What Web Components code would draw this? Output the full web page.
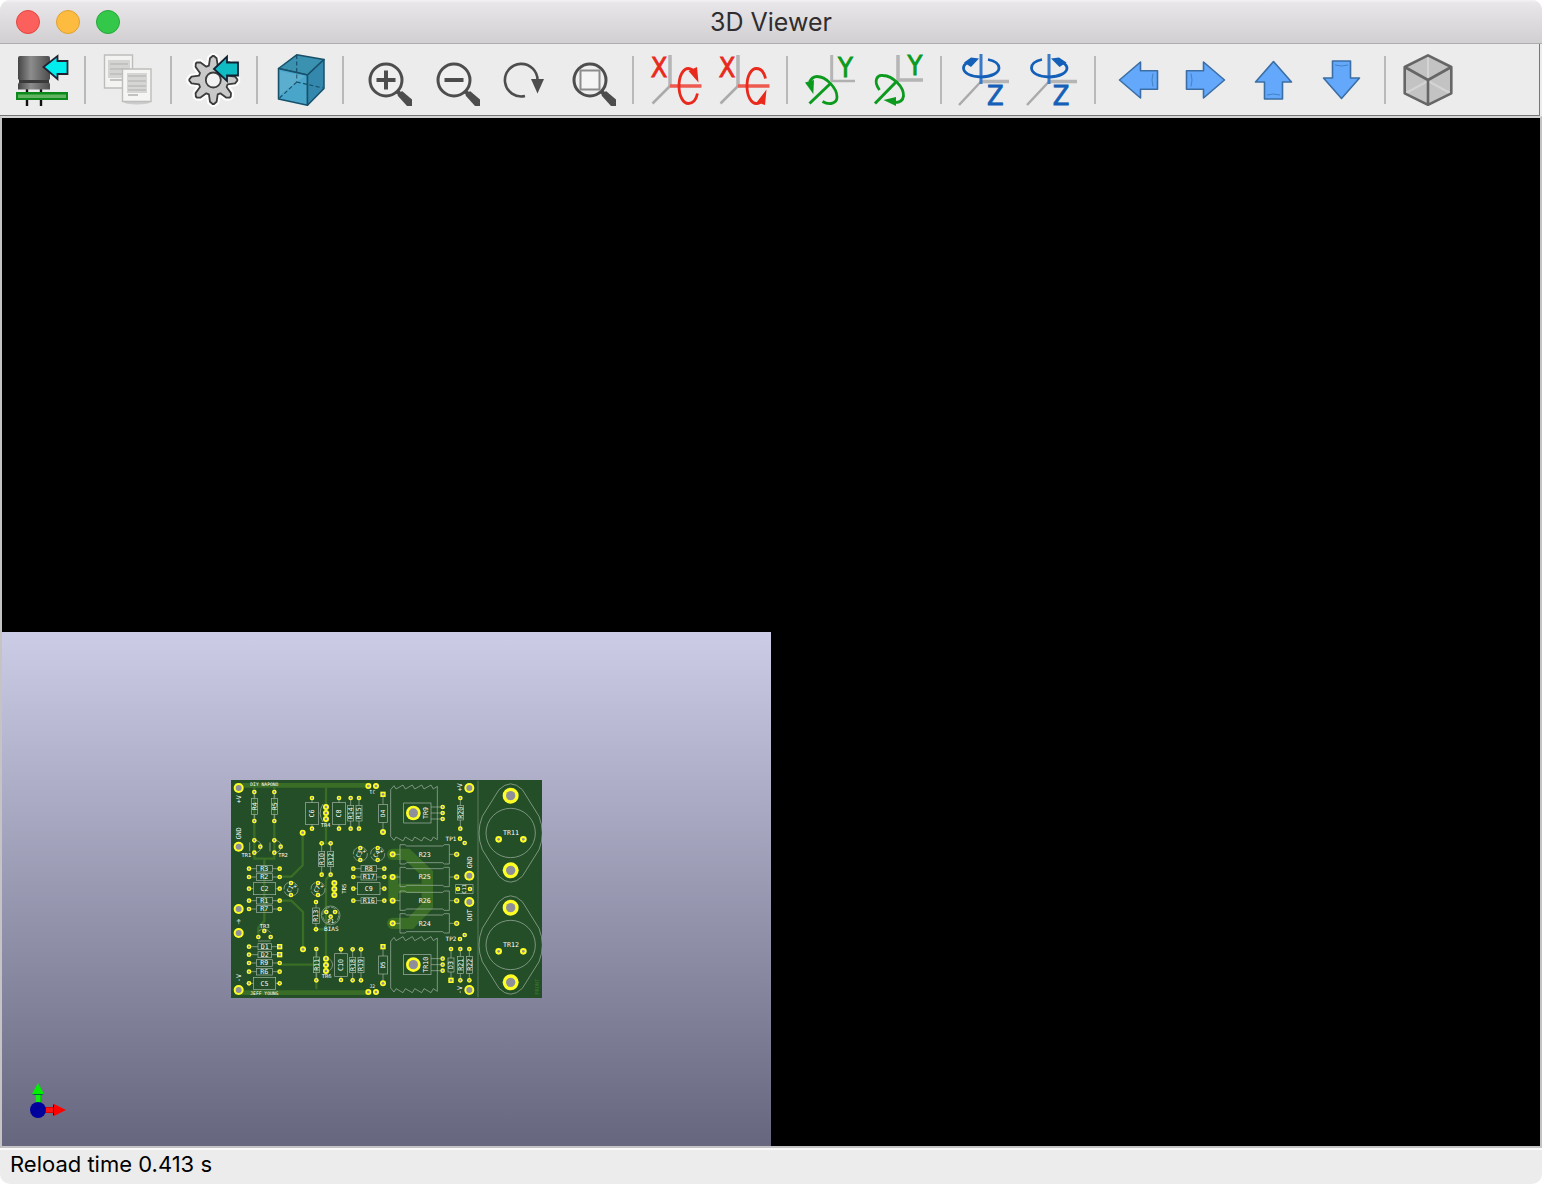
<!DOCTYPE html>
<html lang="en">
<head>
<meta charset="utf-8">
<title>3D Viewer</title>
<style>
  html, body { margin: 0; height: 100%; background: #fff; }
  body { font-family: Inter, Roboto, sans-serif; }
</style>
</head>
<body>
<viewer-window>
  <title-bar slot="title">3D Viewer</title-bar>
  <tool-bar slot="tools">
    <tool-button icon="reload" label="Reload board"></tool-button>
    <tool-divider></tool-divider>
    <tool-button icon="copy" label="Copy 3D image to clipboard"></tool-button>
    <tool-divider></tool-divider>
    <tool-button icon="settings" label="Set display options"></tool-button>
    <tool-divider></tool-divider>
    <tool-button icon="render" label="Render current view"></tool-button>
    <tool-divider></tool-divider>
    <tool-button icon="zoomin" label="Zoom in"></tool-button>
    <tool-button icon="zoomout" label="Zoom out"></tool-button>
    <tool-button icon="redraw" label="Redraw view"></tool-button>
    <tool-button icon="fit" label="Fit in page"></tool-button>
    <tool-divider></tool-divider>
    <tool-button icon="xneg" label="Rotate X clockwise"></tool-button>
    <tool-button icon="xpos" label="Rotate X counterclockwise"></tool-button>
    <tool-divider></tool-divider>
    <tool-button icon="yneg" label="Rotate Y clockwise"></tool-button>
    <tool-button icon="ypos" label="Rotate Y counterclockwise"></tool-button>
    <tool-divider></tool-divider>
    <tool-button icon="zneg" label="Rotate Z clockwise"></tool-button>
    <tool-button icon="zpos" label="Rotate Z counterclockwise"></tool-button>
    <tool-divider></tool-divider>
    <tool-button icon="left" label="Move left"></tool-button>
    <tool-button icon="right" label="Move right"></tool-button>
    <tool-button icon="up" label="Move up"></tool-button>
    <tool-button icon="down" label="Move down"></tool-button>
    <tool-divider></tool-divider>
    <tool-button icon="ortho" label="Toggle orthographic projection"></tool-button>
  </tool-bar>
  <scene-view>
    <pcb-board></pcb-board>
    <axis-gizmo></axis-gizmo>
  </scene-view>
  <status-bar slot="status">Reload time 0.413 s</status-bar>
</viewer-window>

<script>
const define = (name, html, setup) => customElements.define(name, class extends HTMLElement {
  constructor() {
    super();
    const root = this.attachShadow({ mode: 'open' });
    const tpl = document.createElement('template');
    tpl.innerHTML = html;
    root.append(tpl.content.cloneNode(true));
    if (setup) setup(this, root);
  }
});

define('viewer-window', `
  <style>
    :host { display: flex; flex-direction: column; height: 100vh; overflow: hidden; border-radius: 10px; background: #ececec; }
    main { flex: 1; min-height: 0; display: flex; border: 2px solid #c4c4c4; border-top-color: #d4d4d4; background: #000; }
  </style>
  <slot name="title"></slot>
  <slot name="tools"></slot>
  <main><slot></slot></main>
  <slot name="status"></slot>`);

define('title-bar', `
  <style>
    :host { display: grid; grid-template-columns: 1fr auto 1fr; align-items: center; height: 43px;
      border-bottom: 1px solid #aeacae; background: linear-gradient(#f4f2f4 0, #e8e6e8 3px, #d1cfd1 100%); }
    .lights { display: flex; gap: 16px; padding-left: 16px; }
    button { width: 24px; height: 24px; padding: 0; border: 1px solid #e2463f; border-radius: 50%; background: #fc605c; }
    button.min { border-color: #e0a030; background: #fdbc40; }
    button.max { border-color: #25a73a; background: #34c84a; }
    h1 { margin: 0; font-size: 25px; line-height: 32px; font-weight: 400; color: #2f2d2f; }
  </style>
  <div class="lights">
    <button aria-label="Close"></button><button class="min" aria-label="Minimize"></button><button class="max" aria-label="Zoom"></button>
  </div>
  <h1><slot></slot></h1>`);

define('tool-bar', `
  <style>
    :host { display: flex; align-items: center; gap: 16px; height: 71px; padding: 0 16px; margin-right: 2px; box-sizing: border-box;
      border-right: 1px solid #777; background: #ececec; box-shadow: 0 1px #777; margin-bottom: 1px; }
  </style>
  <slot></slot>`);

define('tool-divider', `<style>:host { display: block; width: 2px; height: 48px; background: #b9b9b9; }</style>`);

define('status-bar', `
  <style>
    :host { display: block; padding: 0 10px 5px; border-top: 2px solid #fafafa; font-size: 22px; line-height: 29px; color: #000; }
  </style>
  <slot></slot>`);

const sky = '<path fill="#64a8fb" stroke="#3b6ea5" stroke-width="1.6" stroke-linejoin="round" ';
const lens = '<circle cx="26" cy="26" r="16" fill="#efefef" stroke="#4d4d4d" stroke-width="3"/><path d="M37 37l4 4" stroke="#4d4d4d" stroke-width="4"/><path d="M37.500 41.500L42 37 52 45.500V52H47z" fill="#4d4d4d"/>';
const letter = (ch, x, y, color) => `<text x="${x}" y="${y}" font-size="27" text-anchor="middle" fill="${color}" stroke="${color}" stroke-width=".8" font-family="'Liberation Sans Narrow','DejaVu Sans Condensed',sans-serif">${ch}</text>`;
const gearPath = (() => {
  let d = '';
  const put = (r, a) => { d += (d ? 'L' : 'M') + (25.3 + r * Math.sin(a)).toFixed(1) + ' ' + (26 - r * Math.cos(a)).toFixed(1); };
  for (let i = 0; i < 8; i++) {
    const a = i * Math.PI / 4;
    put(15, a - .3); put(22, a - .15); put(24, a - .03); put(24, a + .03); put(22, a + .15); put(15, a + .3);
  }
  return d + 'z';
})();

const icons = {
  reload: `<defs><linearGradient id="g"><stop stop-color="#454545"/><stop offset=".4" stop-color="#8d8d8d"/><stop offset="1" stop-color="#4c4c4c"/></linearGradient></defs>
    <path d="M11 34v18M25 34v18" stroke="#111" stroke-width="2.400"/>
    <path d="M2 4q0-2 2-2h28q2 0 2 2v21l-2 2 2 3v5.500H2V30l2-3-2-2z" fill="url(#g)"/><path d="M3 26h30v3H3z" fill="#3a3a3a"/>
    <path d="M0 38h52v8H0z" fill="#0b8a1b"/><path d="M2 40.500h48v3.500H2z" fill="#62b362"/>
    <path d="M27.500 13L41.500 2v5h10v13h-10v5z" fill="#00eeee" stroke="#223" stroke-width="1.800"/>`,
  copy: `<g fill="#f3f3f1" stroke="#bdbdbb" stroke-width="1.400"><path d="M2.500 1h28v33h-28z"/></g>
    <path d="M6 6h22v18H6z" fill="#d4d4d2"/><path d="M8 10h18M8 15h18M8 20h18M8 26h12" stroke="#c2c2c0" stroke-width="1.800"/>
    <ellipse cx="35" cy="48" rx="13" ry="2.500" fill="#ccc"/>
    <path d="M20.500 15h28.500v32.500H20.500z" fill="#f5f5f3" stroke="#bdbdbb" stroke-width="1.400"/>
    <path d="M25 19h20v20H25z" fill="#d6d6d4"/><path d="M26 22h18M26 27h18M26 32h18M26 36h18M26 41h10" stroke="#c2c2c0" stroke-width="1.800"/>`,
  settings: `<path d="${gearPath}" fill="#fff" stroke="#fff" stroke-width="6" stroke-linejoin="round"/>
    <path d="${gearPath}" fill="#c9c9c9" stroke="#3c3c3c" stroke-width="1.800" stroke-linejoin="round"/>
    <circle cx="25.300" cy="26" r="7.500" fill="#f2f2f2" stroke="#3c3c3c" stroke-width="1.800"/>
    <path d="M26 15L39 2.500v6h11v13H39v5.500z" fill="#10bcc4" stroke="#123" stroke-width="1.800"/>`,
  render: `<g stroke="#17506a" stroke-width="1.500" stroke-linejoin="round"><path d="M22.700 .8L50 5.500 33.500 21 4.500 14.500z" fill="#3b91b0"/>
    <path d="M4.500 14.500L33.500 21v30.200L4.500 45z" fill="#4aa5ca"/><path d="M33.500 21L50 5.500v29L33.500 51.200z" fill="#3488ad"/></g>
    <path d="M22.700 1v27M22.700 28L5 44.500M22.700 28L49 34" fill="none" stroke="#17506a" stroke-width="1.200" stroke-dasharray="4 2.500"/><path d="M6 17l25 5-25 19z" fill="#fff" opacity=".1"/>`,
  zoomin: lens + '<path d="M26 16.500v19M16.500 26h19" stroke="#4d4d4d" stroke-width="4"/>',
  zoomout: lens + '<path d="M16.500 26h19" stroke="#4d4d4d" stroke-width="4"/>',
  redraw: `<path d="M29 42A16.300 16.300 0 1 1 41.500 27" fill="none" stroke="#4d4d4d" stroke-width="2.600"/><path d="M35 25h13l-6.500 14.500z" fill="#4d4d4d"/>`,
  fit: lens + '<path d="M16.500 16.500h19v19h-19z" fill="#f4f4f4" stroke="#8c8c8c" stroke-width="2"/>',
  xneg: letter('X', 9, 23, '#e8291c') + `<path d="M20 1v31" stroke="#b5b5b5" stroke-width="3.500"/><path d="M20 32L2.500 49.500" stroke="#aaa" stroke-width="2.500"/>
    <path d="M20 32h31.500" stroke="#ee5a50" stroke-width="3.500"/><path d="M47.500 39.500C46 46 42.500 49.500 38.500 49.500 33 49.500 29 42 29 32S33 14.500 38.500 14.500C42 14.500 44 17 46 20" fill="none" stroke="#e8291c" stroke-width="2.800"/><path d="M38.500 17L47 13l1.500 15.500z" fill="#e8291c"/>`,
  xpos: letter('X', 9, 23, '#e8291c') + `<path d="M20 1v31" stroke="#b5b5b5" stroke-width="3.500"/><path d="M20 32L2.500 49.500" stroke="#aaa" stroke-width="2.500"/>
    <path d="M20 32h31.500" stroke="#ee5a50" stroke-width="3.500"/><path d="M47.500 24.500C46 18 42.500 14.500 38.500 14.500 33 14.500 29 22 29 32S33 49.500 38.500 49.500C42 49.500 44 47 46 44" fill="none" stroke="#e8291c" stroke-width="2.800"/><path d="M39 48L48.500 35.500 47 51z" fill="#e8291c"/>`,
  yneg: letter('Y', 41.5, 22.5, '#0b9a1e') + `<path d="M27.700 1v26" stroke="#b5b5b5" stroke-width="3"/><path d="M27 27h24" stroke="#b0b0b0" stroke-width="2.500"/>
    <path d="M27 29L5.500 49.500" stroke="#0b9a1e" stroke-width="3"/><path d="M18.500 47.500C26 52 33 49 33 43 33 34 22 22.500 13 22.500 9 22.500 7 25 5.500 28" fill="none" stroke="#0b9a1e" stroke-width="2.800"/><path d="M1 28.500L10 26l-.7 14z" fill="#0b9a1e"/>`,
  ypos: letter('Y', 43, 21, '#0b9a1e') + `<path d="M26 1v25" stroke="#b5b5b5" stroke-width="3.500"/><path d="M25 26h26" stroke="#b5b5b5" stroke-width="3.500"/>
    <path d="M25 27L3 49.500" stroke="#0b9a1e" stroke-width="3"/><path d="M7.500 36C1 27 5 20.500 11 21.500 21 22 32 33 31.500 42 31 46 28 48.500 23 48.500" fill="none" stroke="#0b9a1e" stroke-width="2.800"/><path d="M11.500 46l12.500-3v9z" fill="#0b9a1e"/>`,
  zneg: `<path d="M23 27.500h28" stroke="#b5b5b5" stroke-width="3.500"/><path d="M23 27.500L1 51" stroke="#aaa" stroke-width="2.500"/><path d="M23 0v30" stroke="#3a79c8" stroke-width="3"/>
    <path d="M30 5.500C37 7 41 10 41 14 41 19 33 23 23 23S5.500 19 5.500 14C5.500 11 8 9 12 7" fill="none" stroke="#1460b8" stroke-width="2.800"/><path d="M6 8.500L13 3.500l8 1-8 8.500z" fill="#1460b8"/>` + letter('Z', 37.3, 51, '#1460b8'),
  zpos: `<path d="M23 27.500h28" stroke="#b5b5b5" stroke-width="3.500"/><path d="M23 27.500L1 51" stroke="#aaa" stroke-width="2.500"/><path d="M23 0v30" stroke="#3a79c8" stroke-width="3"/>
    <path d="M16 5.500C9 7 5.500 10 5.500 14 5.500 19 13 23 23 23S41 19 41 14C41 11 38 9 34 7" fill="none" stroke="#1460b8" stroke-width="2.800"/><path d="M40.500 8.500L33 3.500l-8 1 8.500 8.500z" fill="#1460b8"/>` + letter('Z', 35, 51, '#1460b8'),
  left: sky + 'd="M7.500 26L28.500 8v8.700h17v18.600h-17V44z"/><path d="M41 19.500q-2 6.500 0 13" fill="none" stroke="#4482c4"/>',
  right: sky + 'd="M44.500 26L23.500 8v8.700h-17v18.600h17V44z"/><path d="M11 19.500q2 6.500 0 13" fill="none" stroke="#4482c4"/>',
  up: sky + 'd="M25.500 7.500L43.500 28h-9v17h-18V28h-9z"/><path d="M19 41q6.500-2 13 0" fill="none" stroke="#4482c4"/>',
  down: sky + 'd="M25.500 44.500L43.500 24h-9V7h-18v17h-9z"/><path d="M19 11q6.500 2 13 0" fill="none" stroke="#4482c4"/>',
  ortho: `<path d="M26 1.300L49.300 13v26.300L26 50.800 2.700 39.300V13z" fill="#c3c3c3"/><path d="M26 2v22M26 27L4 39M26 27l22 12" stroke="#d4d4d4" stroke-width="2" fill="none"/>
    <path d="M26 1.300L49.300 13v26.300L26 50.800 2.700 39.300V13zM2.700 13L26 26 49.300 13M26 26v25" fill="none" stroke="#666" stroke-width="2.600" stroke-linejoin="round"/>`
};

customElements.define('tool-button', class extends HTMLElement {
  connectedCallback() {
    if (this.shadowRoot) return;
    this.attachShadow({ mode: 'open' }).innerHTML = `
      <style>
        :host { display: block; }
        button { display: block; width: 52px; height: 52px; padding: 0; border: 0; background: none; }
        svg { display: block; width: 52px; height: 52px; overflow: visible; }
      </style>
      <button aria-label="${this.getAttribute('label')}"><svg viewBox="0 0 52 52" aria-hidden="true">${icons[this.getAttribute('icon')]}</svg></button>`;
  }
});

define('scene-view', `
  <style>
    :host { display: grid; width: 50%; height: 50%; align-self: flex-end; background: linear-gradient(#cccce6, #66667f); }
    ::slotted(*) { grid-area: 1 / 1; }
    ::slotted(pcb-board) { place-self: center; }
    ::slotted(axis-gizmo) { place-self: end start; }
  </style>
  <slot></slot>`);

define('axis-gizmo', `
  <style>:host { display: block; padding: 0 0 24px 22px; } svg { display: block; width: 44px; height: 44px; }</style>
  <svg viewBox="0 0 44 44" role="img" aria-label="Axes">
    <path d="M11 32V16h6v16z" fill="#0c0"/><path d="M12 32V16h4v16z" fill="#1e1"/>
    <path d="M14 5l6 11H8z" fill="#0e0"/><path d="M8 16h12l-2 1h-8z" fill="#064"/>
    <path d="M14 29h17v6H14z" fill="#d00"/><path d="M14 30h17v4H14z" fill="#f11"/>
    <path d="M42 32L30 38V26z" fill="#f00"/><path d="M30 26v12l-1-1V27z" fill="#500"/>
    <circle cx="14" cy="32" r="8" fill="#00009c"/>
  </svg>`);

/* Board drawing. One unit is a third of a pixel; each block has its own origin. */
const pad = (x, y, r = 7) => `<circle cx="${x}" cy="${y}" r="${r}" stroke="none" fill="#ffff24"/><circle cx="${x}" cy="${y}" r="${r > 20 ? 14 : r > 10 ? 9 : r > 7 ? 4 : 3}" fill="#8f8f9c"/>`;
const square = (x, y) => `<path d="M${x - 8} ${y - 8}h16v16h-16z" stroke="none" fill="#ffff24"/><circle cx="${x}" cy="${y}" r="4" fill="#8f8f9c"/>`;
const label = (t, x, y, size = 20, turn = 0) => `<text font-size="${size}" text-anchor="middle" transform="translate(${x} ${y})${turn ? ` rotate(${turn})` : ''}" y="${Math.round(size * .36)}">${t}</text>`;
const box = (x, y, w, h) => `<rect x="${x}" y="${y}" width="${w}" height="${h}"/>`;
const hPart = (t, x1, x2, y, a, b, half) => `<path d="M${x1} ${y}H${a}M${b} ${y}H${x2}"/>` + box(a, y - half, b - a, half * 2) + pad(x1, y) + pad(x2, y) + label(t, (a + b) / 2, y);
const vPart = (t, x, y1, y2, a, b, half) => `<path d="M${x} ${y1}V${a}M${x} ${b}V${y2}"/>` + box(x - half, a, half * 2, b - a) + pad(x, y1) + pad(x, y2) + label(t, x, (a + b) / 2, 20, -90);
const block = (x, y, ...parts) => `<g transform="translate(${x} ${y})">${parts.join('')}</g>`;
const trace = (d, w = 7) => `<path d="${d}" stroke="#3a6e26" stroke-width="${w}"/>`;
const fins = (y, s) => `<path d="M20 ${y}l10 ${-12 * s} 6 ${10 * s}${` 21 ${-12 * s} 7 ${12 * s}`.repeat(4)} 12 ${-8 * s}V${y}"/>`;
const heatsink = (t, y) => fins(y - 70, 1) + fins(y + 70, -1) + `<path d="M20 ${y - 70}v140M160 ${y - 70}v140"/>` + box(59, y - 30, 82, 60) +
  `<path d="M141 ${y - 18}h30M141 ${y}h30M141 ${y + 18}h30"/>` + pad(88, y, 22) + pad(176, y - 18) + pad(176, y) + pad(176, y + 18) + label(t, 125, y, 20, -90);
const to3 = (t, y) => `<circle cx="380" cy="${y}" r="74"/><path d="M345 ${y - 130}Q380 ${y - 165} 415 ${y - 130}L465 ${y - 50}Q485 ${y} 465 ${y + 50}L415 ${y + 130}Q380 ${y + 165} 345 ${y + 130}L295 ${y + 50}Q275 ${y} 295 ${y - 50}z"/>` +
  pad(380, y - 112, 24) + pad(380, y + 112, 24) + pad(344, y + 19, 10) + pad(418, y + 19, 10) + label(t, 381, y);
const power = (t, y) => `<path d="M48 ${y - 29}h15l5 4h108l5-4h15v58h-15l-5-4H68l-5 4H48zM26 ${y}h22M196 ${y}h22"/>` + pad(26, y, 9) + pad(218, y, 8) + label(t, 122, y);
const electro = (t, x, y) => `<circle cx="${x}" cy="${y}" r="21" stroke-dasharray="26 6"/>` + pad(x, y - 18) + pad(x, y + 18) + label(t, x - 3, y, 18, -60) + label('+', x + 12, y - 8, 18);
const cap = vPart;

const board = `
  <rect width="933" height="654" fill="#234e27" stroke="none"/>
  ${block(-9, -12,
    trace('M20 28H430', 14), trace('M20 650H430', 14),
    trace('M79 30V248H139V30M109 248V435L91 455V480M224 170V268L190 302H155M155 374H190L225 408V520M294 30V200M281 202H308M308 295L294 310V545M264 460H294M155 566H262M265 520V640'))}
  ${block(459, -12,
    '<path d="M26 235H70L130 292V390L80 442H26" stroke="#3a6e26" stroke-width="34" stroke-linecap="round"/><path d="M28 295V374" stroke="#3a6e26" stroke-width="30"/><path d="M28 337H130" stroke="#3a6e26" stroke-width="28"/>',
    '<path d="M282 14V664" stroke="#5c7a5e" stroke-width="3"/>')}
  ${block(-9, -12,
    pad(32, 36, 15), pad(32, 212, 15), label('+V', 32, 70, 20, -90), label('GND', 32, 172, 20, -90), label('DIY NAPONO', 109, 26, 14),
    vPart('R4', 79, 48, 135, 67, 115, 9), vPart('R5', 139, 48, 135, 67, 115, 9),
    cap('C6', 252, 66, 158, 80, 145, 20), cap('C8', 333, 66, 158, 80, 145, 20),
    vPart('R14', 368, 66, 158, 88, 135, 9), vPart('R15', 393, 66, 158, 88, 135, 9),
    '<path d="M285 84Q268 112 285 138"/>', pad(294, 93, 9), pad(294, 111, 9), pad(294, 129, 9), label('TR4', 293, 148, 16),
    pad(224, 170, 9), pad(421, 30, 9), pad(444, 30, 9), label('J1', 433, 48, 14, 180),
    box(452, 85, 26, 54), '<path d="M465 55V85M465 139V168"/>', square(465, 55), pad(465, 168, 9), label('D4', 465, 112, 18, -90),
    '<path d="M65 199V226M79 193Q96 194 99 206M79 230Q92 231 98 219M126 199V226M139 193Q156 194 159 206M139 230Q152 231 158 219"/>', pad(79, 193), pad(79, 230), pad(97, 212), pad(139, 193), pad(139, 230), pad(158, 212),
    label('TR1', 55, 236, 16), label('TR2', 165, 236, 16),
    vPart('R10', 281, 202, 296, 226, 272, 9), vPart('R12', 308, 202, 296, 226, 272, 9),
    electro('C3', 397, 234), electro('C4', 449, 234),
    hPart('R3', 63, 155, 278, 85, 133, 10), hPart('R2', 63, 155, 303, 85, 133, 10),
    hPart('R8', 376, 469, 278, 399, 446, 9), hPart('R17', 376, 469, 303, 399, 446, 9),
    hPart('C2', 63, 155, 338, 76, 143, 18), hPart('C9', 376, 469, 338, 388, 456, 18),
    electro('C1', 189, 339), electro('C7', 270, 339),
    pad(319, 321, 9), pad(319, 339, 9), pad(319, 357, 9), label('TR5', 347, 338, 16, -90))}
  ${block(459, -12,
    heatsink('TR9', 111), to3('TR11', 171), pad(256, 36, 15), label('+V', 228, 34, 20, -90),
    vPart('R20', 229, 66, 158, 88, 132, 9), label('TP1', 201, 188, 18), pad(228, 188), pad(242, 201),
    power('R23', 235), power('R25', 303), label('GND', 256, 259, 20, -90), pad(256, 299, 15),
    box(215, 326, 52, 26), pad(222, 339), pad(258, 339), label('C11', 240, 339, 16, -90),
    power('R26', 374), power('R24', 442))}
  ${block(-9, 318,
    pad(32, 69, 15), pad(32, 141, 15), pad(32, 312, 15), label('⏚', 32, 106, 20, 180), label('-V', 32, 276, 20, -90),
    hPart('R1', 63, 155, 44, 85, 133, 10), hPart('R7', 63, 155, 69, 85, 133, 10), hPart('R16', 376, 469, 44, 399, 446, 9),
    '<path d="M90 165h38M92 135Q109 120 128 140"/>', pad(91, 153), pad(109, 135), pad(128, 153), label('TR3', 110, 120, 16),
    vPart('R13', 264, 48, 130, 66, 112, 10),
    '<circle cx="308" cy="88" r="28"/><circle cx="308" cy="88" r="24" stroke-dasharray="14 5"/>', pad(295, 78), pad(321, 78), pad(308, 92), label('P1', 308, 106, 16), label('BIAS', 310, 130, 18),
    hPart('D1', 63, 155, 182, 90, 130, 9), square(155, 182), hPart('D2', 63, 155, 206, 90, 130, 9), square(155, 206),
    hPart('R9', 63, 155, 231, 85, 133, 10), hPart('R6', 63, 155, 257, 85, 133, 10), hPart('C5', 63, 155, 292, 76, 143, 18),
    label('JEFF YOUNG', 109, 321, 14), pad(225, 190, 9),
    vPart('R11', 265, 189, 283, 213, 260, 9), '<path d="M303 217Q325 236 303 256"/>', pad(294, 218, 9), pad(294, 237, 9), pad(294, 255, 9), label('TR6', 296, 271, 16),
    cap('C10', 339, 190, 282, 203, 271, 19), vPart('R18', 374, 190, 283, 214, 260, 9), vPart('R19', 399, 190, 283, 214, 260, 9),
    box(452, 210, 26, 54), '<path d="M465 182V210M465 264V292"/>', square(465, 182), pad(465, 292, 9), label('D5', 465, 237, 18, -90),
    pad(421, 318, 9), pad(444, 318, 9), label('J2', 433, 300, 14))}
  ${block(459, 318,
    heatsink('TR10', 236), to3('TR12', 177), pad(256, 48, 15), label('OUT', 256, 88, 20, -90),
    label('TP2', 201, 160, 18), pad(228, 159), pad(242, 147),
    vPart('D3', 201, 189, 283, 216, 258, 9), square(201, 283), vPart('R21', 229, 189, 283, 211, 262, 9), vPart('R22', 256, 189, 283, 211, 262, 9),
    pad(256, 312, 15), label('-V', 228, 312, 20, -90), '<g style="--ink:#3b7a2c">' + label('FRONT', 459, 302, 16, -90) + '</g>')}`;

define('pcb-board', `
  <style>
    :host { display: block; }
    svg { display: block; width: 311px; height: 218px; overflow: hidden; fill: none; stroke: #a9b8aa; stroke-width: 2; }
    circle[fill] { stroke: none; }
    text { fill: var(--ink, #fff); stroke: none; font-family: "DejaVu Sans Mono", monospace; }
  </style>
  <svg viewBox="0 0 933 654" role="img" aria-label="Circuit board">${board}</svg>`);
</script>
</body>
</html>
